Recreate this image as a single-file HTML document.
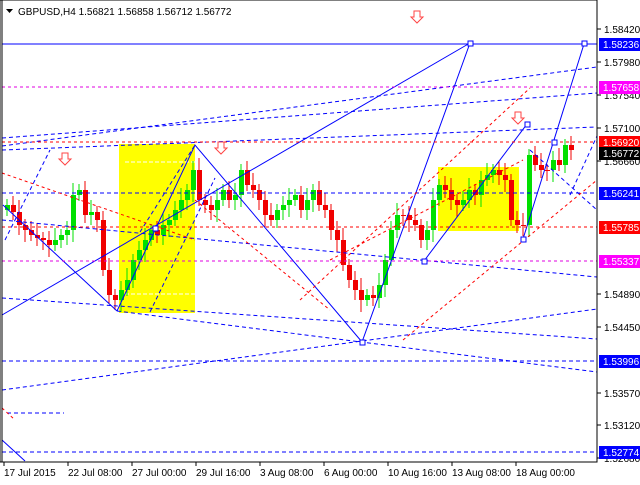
<!DOCTYPE html><html><head><style>
body{margin:0;background:#fff;width:640px;height:480px;overflow:hidden;font-family:"Liberation Sans",sans-serif}
svg text{font-family:"Liberation Sans",sans-serif;font-size:10px}
</style></head><body>
<svg id="s" width="640" height="480" xmlns="http://www.w3.org/2000/svg">
<rect x="0" y="0" width="640" height="480" fill="#fff"/>
<rect x="119" y="144" width="76" height="169" fill="#ffff00"/>
<rect x="438" y="167" width="81" height="64" fill="#ffff00"/>
<line x1="125" y1="162" x2="195" y2="162" stroke="#fff" stroke-dasharray="4,2"/>
<line x1="125" y1="294" x2="195" y2="294" stroke="#fff" stroke-dasharray="4,2"/>
<g id="c"></g>
<g fill="none" stroke="#00f" stroke-width="1">
<line x1="2" y1="44" x2="597" y2="44"/>
<polyline points="2,315 470,43"/>
<polyline points="117,311 195,145 362,342 470,43"/>
<polyline points="424,261 527,124"/>
<polyline points="523,239 584,44"/>
<polyline points="3,205 117,311"/>
</g>
<g fill="none" stroke="#00f" stroke-dasharray="4,3">
<line x1="2" y1="193" x2="597" y2="193"/>
<line x1="2" y1="361" x2="597" y2="361"/>
<line x1="2" y1="452" x2="597" y2="452"/>
<line x1="2" y1="150" x2="597" y2="127"/>
<line x1="2" y1="146" x2="597" y2="67"/>
<line x1="2" y1="138" x2="597" y2="93"/>
<line x1="2" y1="298" x2="597" y2="339"/>
<line x1="2" y1="390" x2="597" y2="309"/>
<line x1="117" y1="311" x2="597" y2="372"/>
<line x1="2" y1="220" x2="597" y2="277"/>
<line x1="140" y1="232" x2="195" y2="145"/>
<line x1="150" y1="312" x2="215" y2="178"/>
<line x1="5" y1="240" x2="50" y2="150"/>
<line x1="530" y1="150" x2="597" y2="210"/>
<line x1="570" y1="195" x2="597" y2="136"/>
<line x1="7" y1="413" x2="64" y2="413"/>
</g>
<g fill="none" stroke="#f00" stroke-dasharray="3,3">
<line x1="2" y1="142" x2="597" y2="142"/>
<line x1="2" y1="227" x2="597" y2="227"/>
<line x1="2" y1="173" x2="195" y2="240"/>
<line x1="195" y1="200" x2="330" y2="310"/>
<line x1="300" y1="300" x2="530" y2="88"/>
<line x1="403" y1="340" x2="597" y2="180"/>
<line x1="330" y1="260" x2="523" y2="160"/>
<line x1="2" y1="408" x2="15" y2="420"/>
</g>
<g fill="none" stroke="#e000e0" stroke-dasharray="3,3">
<line x1="2" y1="87" x2="597" y2="87"/>
<line x1="2" y1="261" x2="597" y2="261"/>
</g>
<line x1="2" y1="440" x2="25" y2="461" stroke="#00f"/>
<g fill="#fff" stroke="#00f">
<rect x="468" y="41" width="5" height="5"/><rect x="582" y="41" width="5" height="5"/>
<rect x="525" y="122" width="5" height="5"/><rect x="552" y="140" width="5" height="5"/>
<rect x="360" y="340" width="5" height="5"/><rect x="422" y="259" width="5" height="5"/>
<rect x="521" y="237" width="5" height="5"/><rect x="153" y="226" width="5" height="5"/>
</g>
<g fill="#fff" stroke="#f44">
<path d="M62,153h6v6h3l-6,6l-6,-6h3z"/><path d="M218,142h6v6h3l-6,6l-6,-6h3z"/>
<path d="M414,11h6v6h3l-6,6l-6,-6h3z"/><path d="M515,112h6v6h3l-6,6l-6,-6h3z"/>
</g>
<rect x="0" y="0" width="597" height="462" fill="none" stroke="#000"/>
<line x1="2" y1="0" x2="2" y2="462" stroke="#000"/>
<path d="M6,9h7l-3.5,4z" fill="#000"/>
<text x="18" y="15" font-size="11">GBPUSD,H4  1.56821 1.56858 1.56712 1.56772</text>
<g id="ax"></g>
</svg>
<script>
var ys=[205,212,225,230,235,238,240,245,240,235,230,195,190,215,212,220,270,295,300,290,280,260,250,240,230,235,225,220,210,200,190,170,200,205,210,200,190,200,195,170,185,190,200,215,220,210,205,200,195,210,200,190,205,210,230,240,265,280,290,300,295,298,285,260,230,215,215,220,225,240,230,200,185,190,200,205,200,190,195,180,175,170,175,180,220,225,225,155,165,170,170,160,165,145,150];
var s='',prev=ys[0]+5;
for(var i=0;i<ys.length;i++){var x=5+i*6,o=prev,c=ys[i];var up=c<o;var col=up?'#00e000':'#f00000';var t=Math.min(o,c),b=Math.max(o,c);if(b-t<1)b=t+1;
s+='<line x1="'+(x+2)+'" y1="'+(t-6-(i%3)*3)+'" x2="'+(x+2)+'" y2="'+(b+6+(i%4)*2)+'" stroke="'+col+'"/><rect x="'+x+'" y="'+t+'" width="5" height="'+(b-t)+'" fill="'+col+'"/>';prev=c;}
document.getElementById('c').innerHTML=s;
var a='';
[[29,'1.58420'],[62,'1.57980'],[95,'1.57540'],[128,'1.57100'],[161,'1.56660'],[294,'1.54890'],[327,'1.54450'],[393,'1.53570'],[425,'1.53120'],[458,'1.52680']].forEach(function(l){a+='<line x1="597" y1="'+l[0]+'" x2="601" y2="'+l[0]+'" stroke="#000"/><text x="604" y="'+(l[0]+4)+'">'+l[1]+'</text>';});
[[44,'1.58236','#0000ff'],[87,'1.57658','#ff00ff'],[142,'1.56920','#ff0000'],[153,'1.56772','#000'],[193,'1.56241','#0000ff'],[227,'1.55785','#ff0000'],[261,'1.55337','#ff00ff'],[361,'1.53996','#0000ff'],[452,'1.52774','#0000ff']].forEach(function(l){a+='<rect x="599" y="'+(l[0]-6)+'" width="41" height="13" fill="'+l[2]+'"/><text x="603" y="'+(l[0]+4)+'" fill="#fff">'+l[1]+'</text>';});
[[2,'17 Jul 2015'],[66,'22 Jul 08:00'],[130,'27 Jul 00:00'],[194,'29 Jul 16:00'],[258,'3 Aug 08:00'],[322,'6 Aug 00:00'],[386,'10 Aug 16:00'],[450,'13 Aug 08:00'],[514,'18 Aug 00:00']].forEach(function(l){a+='<line x1="'+(l[0]+2)+'" y1="462" x2="'+(l[0]+2)+'" y2="466" stroke="#000"/><text x="'+(l[0]+2)+'" y="476">'+l[1]+'</text>';});
document.getElementById('ax').innerHTML=a;
</script>
</body></html>
